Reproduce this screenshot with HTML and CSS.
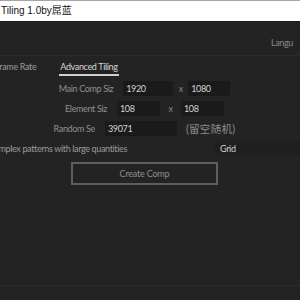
FILE: index.html
```html
<!DOCTYPE html>
<html lang="en">
<head>
  <meta charset="UTF-8" />
  <title>Tiling 1.0</title>
  <link rel="stylesheet" href="styles.css">
</head>
<body>

<div class="titlebar">Tiling 1.0by屌蓝</div>

<div class="toolbar">
  <span class="lang">Langu</span>
</div>

<div class="panel">
  <div class="tabs">
    <span class="tab">Frame Rate</span>
    <span class="tab active">Advanced Tiling</span>
  </div>

  <div class="form">
    <div class="row">
      <span class="label">Main Comp Siz</span>
      <span class="field w50">1920</span>
      <span class="times">x</span>
      <span class="field w42">1080</span>
    </div>
    <div class="row">
      <span class="label">Element Siz</span>
      <span class="field w43">108</span>
      <span class="times wide">x</span>
      <span class="field w43">108</span>
    </div>
    <div class="row">
      <span class="label">Random Se</span>
      <span class="field w72">39071</span>
      <span class="note">(留空随机)</span>
    </div>
    <div class="row left">
      <div class="hint"><span>Complex patterns with large quantities</span></div>
      <span class="select">Grid</span>
    </div>
    <div class="row">
      <button class="create">Create Comp</button>
    </div>
  </div>
</div>

<div class="footer"></div>

</body>
</html>
```

FILE: styles.css
```css
html, body {
  margin: 0;
  height: 300px;
  overflow: hidden;
}

body {
  display: flex;
  flex-direction: column;
  background: #232323;
  font-family: 'Lato', 'Noto Sans CJK SC', sans-serif;
  font-size: 9px;
  letter-spacing: -0.35px;
  color: #8e8e8e;
}

.titlebar {
  height: 20px;
  line-height: 20px;
  border-top: 1px solid #a6a6a6;
  background: #fff;
  color: #111;
  font-family: 'Liberation Sans', 'Noto Sans CJK SC', sans-serif;
  font-size: 10px;
  letter-spacing: 0;
  padding-left: 1px;
}

.toolbar {
  height: 35px;
  border-top: 1px solid #1a1a1a;
  border-bottom: 1px solid #2c2c2c;
  display: flex;
  justify-content: flex-end;
  box-sizing: border-box;
}

.lang {
  padding: 14px 7px 0 0;
  line-height: 14px;
  color: #8a8a8a;
}

.panel {
  flex: 1;
  width: 289px;
}

.tabs {
  display: flex;
  gap: 23px;
  margin-left: -5px;
  height: 20px;
}

.tab {
  padding-top: 4px;
  line-height: 14px;
  color: #9a9a9a;
}

.tab.active {
  color: #d6d6d6;
  border-bottom: 2px solid #d0d0d0;
  padding: 4px 1px 0;
}

.form {
  margin-top: 5px;
  display: flex;
  flex-direction: column;
  gap: 5px;
}

.row {
  display: flex;
  justify-content: center;
  align-items: center;
  height: 15px;
  white-space: nowrap;
}

.row.left {
  justify-content: flex-start;
}

.label {
  margin-right: 10px;
  color: #909090;
}

.field {
  box-sizing: border-box;
  height: 15px;
  line-height: 15px;
  padding-left: 3px;
  background: #1a1a1a;
  color: #d2d2d2;
  flex-shrink: 0;
}

.w50 { width: 50px; }
.w42 { width: 42px; }
.w43 { width: 43px; }
.w72 { width: 72px; }

.times {
  width: 15px;
  text-align: center;
  color: #8a8a8a;
}

.times.wide {
  width: 21px;
}

.note {
  margin-left: 9px;
  color: #8e8e8e;
  font-size: 10.5px;
  letter-spacing: 0.3px;
}

.hint {
  width: 127px;
  flex-shrink: 0;
  display: flex;
  justify-content: flex-end;
  color: #9a9a9a;
}

.select {
  box-sizing: border-box;
  flex-shrink: 0;
  margin-left: 88px;
  width: 100px;
  height: 15px;
  line-height: 15px;
  padding-left: 5px;
  background: #1f1f1f;
  color: #d2d2d2;
}

.create {
  box-sizing: border-box;
  width: 147px;
  height: 23px;
  margin-top: 9px;
  background: transparent;
  border: 2px solid #5e5e5e;
  color: #8e8e8e;
  font-family: 'Lato', sans-serif;
  font-size: 9px;
  letter-spacing: -0.2px;
}

.footer {
  height: 14px;
  border-top: 1px solid #2c2c2c;
}
```
